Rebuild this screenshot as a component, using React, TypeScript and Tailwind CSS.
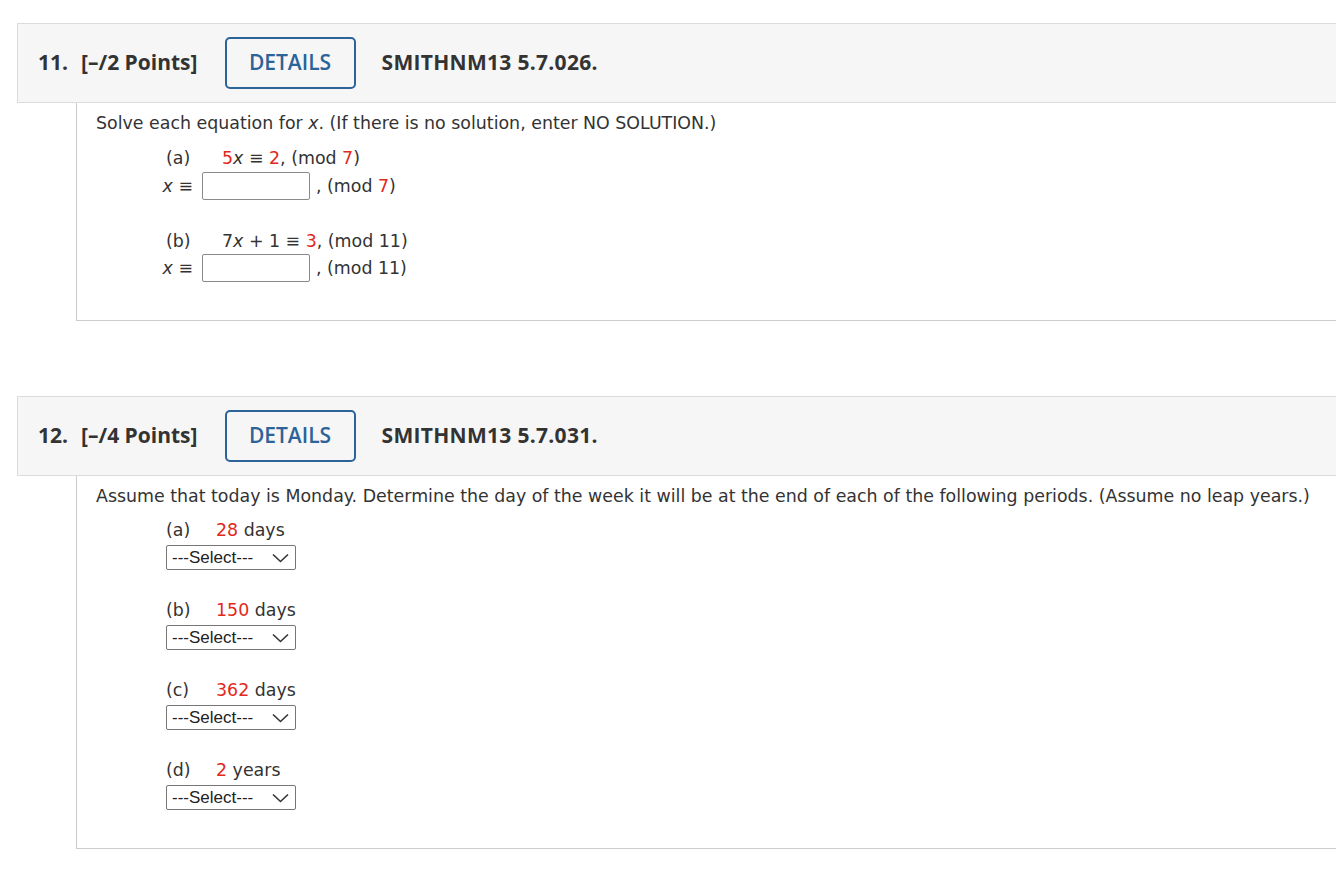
import React from 'react';

const red = 'text-[#e3281b]';

function Header({ num, points, code }: { num: string; points: string; code: string }) {
  return (
    <div
      className="ml-[17px] w-[1340px] h-[80px] bg-[#f6f6f6] border border-[#dcdcdc] flex items-center text-[#333] text-[21px] font-bold"
      style={{ fontFamily: '"Open Sans", sans-serif' }}
    >
      <span className="ml-[20px]">{num}</span>
      <span className="ml-[13px]">{points}</span>
      <button className="ml-[27px] w-[131px] h-[52px] border-2 border-[#2c6399] rounded-[5px] text-[#2c6399] text-[21px] font-semibold">
        DETAILS
      </button>
      <span className="ml-[26px] tracking-[0.3px]">{code}</span>
    </div>
  );
}

function Chevron() {
  return (
    <svg width="17" height="10" viewBox="0 0 17 10" fill="none">
      <path d="M1 1.5 L8.5 8.5 L16 1.5" stroke="#333" strokeWidth="1.6" />
    </svg>
  );
}

function SelectBox() {
  return (
    <div
      className="w-[130px] h-[25px] border border-[#767676] rounded-[2px] flex items-center justify-between pl-[5px] pr-[6px] text-[17px] text-[#222] bg-white"
      style={{ fontFamily: '"Liberation Sans", Arial, sans-serif' }}
    >
      <span>---Select---</span>
      <Chevron />
    </div>
  );
}

function Input() {
  return <div className="w-[108px] h-[28px] border border-[#8a8a8a] rounded-[2px] bg-white shrink-0" />;
}

function XEq() {
  return (
    <span className="w-[36px] whitespace-nowrap flex justify-end pr-[9px]">
      <i>x</i>&nbsp;≡
    </span>
  );
}

function Period({ label, value, unit, first }: { label: string; value: string; unit: string; first?: boolean }) {
  return (
    <div className={first ? 'mt-[10px]' : 'mt-[28px]'}>
      <div className="h-[24px] flex items-center pl-[70px]">
        <span className="w-[50px]">{label}</span>
        <span className={red}>{value}</span>
        <span>&nbsp;{unit}</span>
      </div>
      <div className="mt-[3px] pl-[70px]">
        <SelectBox />
      </div>
    </div>
  );
}

export default function App() {
  return (
    <div
      className="w-[1336px] min-h-[896px] overflow-hidden bg-white text-[#333] text-[17.4px]"
      style={{ fontFamily: '"DejaVu Sans", Verdana, sans-serif' }}
    >
      <div className="pt-[23px]">
        <Header num="11." points="[–/2 Points]" code="SMITHNM13 5.7.026." />
        <div className="ml-[76px] w-[1300px] border-l border-b border-[#cccccc] pt-[8px] pb-[38px] pl-[19px]">
          <div className="h-[24px] flex items-center whitespace-nowrap">
            Solve each equation for&nbsp;<i>x</i>. (If there is no solution, enter NO SOLUTION.)
          </div>
          <div className="mt-[11px] h-[24px] flex items-center pl-[70px]">
            <span className="w-[56px]">(a)</span>
            <span className={red}>5</span>
            <i>x</i>
            <span>&nbsp;≡&nbsp;</span>
            <span className={red}>2</span>
            <span>, (mod&nbsp;</span>
            <span className={red}>7</span>
            <span>)</span>
          </div>
          <div className="mt-[2px] h-[28px] flex items-center pl-[70px]">
            <XEq />
            <Input />
            <span className="ml-[6px]">, (mod&nbsp;</span>
            <span className={red}>7</span>
            <span>)</span>
          </div>
          <div className="mt-[29px] h-[24px] flex items-center pl-[70px]">
            <span className="w-[56px]">(b)</span>
            <span>7</span>
            <i>x</i>
            <span>&nbsp;+ 1 ≡&nbsp;</span>
            <span className={red}>3</span>
            <span>, (mod 11)</span>
          </div>
          <div className="mt-[1px] h-[28px] flex items-center pl-[70px]">
            <XEq />
            <Input />
            <span className="ml-[6px]">, (mod 11)</span>
          </div>
        </div>
      </div>

      <div className="pt-[75px]">
        <Header num="12." points="[–/4 Points]" code="SMITHNM13 5.7.031." />
        <div className="ml-[76px] w-[1300px] border-l border-b border-[#cccccc] pt-[8px] pb-[38px] pl-[19px]">
          <div className="h-[24px] flex items-center whitespace-nowrap">
            Assume that today is Monday. Determine the day of the week it will be at the end of each of the following periods. (Assume no leap years.)
          </div>
          <Period first label="(a)" value="28" unit="days" />
          <Period label="(b)" value="150" unit="days" />
          <Period label="(c)" value="362" unit="days" />
          <Period label="(d)" value="2" unit="years" />
        </div>
      </div>
    </div>
  );
}
